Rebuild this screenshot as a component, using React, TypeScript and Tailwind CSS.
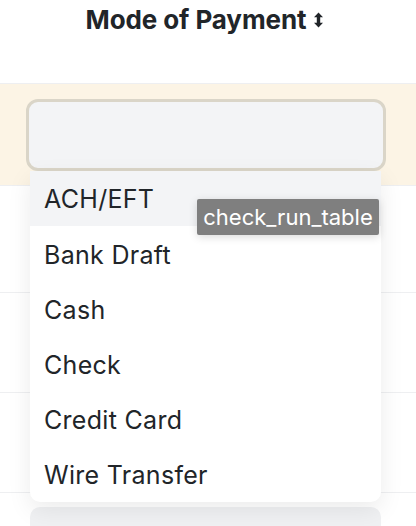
const options = ["ACH/EFT", "Bank Draft", "Cash", "Check", "Credit Card", "Wire Transfer"];

const SortIcon = () => (
  <svg width="11" height="16" viewBox="0 0 11 16" className="ml-[7px] mt-[10px]">
    <path d="M5.5 0.5 L10 5.2 L7.2 5.2 L7.2 10.8 L10 10.8 L5.5 15.5 L1 10.8 L3.8 10.8 L3.8 5.2 L1 5.2 Z" fill="#212529" />
  </svg>
);

const App = () => {
  return (
    <div
      className="relative w-[416px] h-[526px] overflow-hidden bg-white text-[#212529]"
      style={{ fontFamily: "Inter, 'Noto Sans', sans-serif" }}
    >
      <div className="h-[83px] flex justify-center pt-[2px]">
        <div className="flex items-start pr-[6px]">
          <span className="text-[26px] font-bold leading-[36px] tracking-[-0.1px]">Mode of Payment</span>
          <SortIcon />
        </div>
      </div>

      <div className="border-t border-[#eeeff1] bg-[#fcf4e5] h-[102px] pt-[15px] pl-[26px] pr-[30px]">
        <div className="h-[72px] rounded-[12px] border-[3px] border-[#dad5c8] bg-[#f3f4f6]" />
      </div>
      <div className="border-t border-[#eeeff1] h-[107px]" />
      <div className="border-t border-[#eeeff1] h-[100px]" />
      <div className="border-t border-[#eeeff1] h-[100px]" />
      <div className="border-t border-[#eeeff1] pt-[14px] px-[30px] pr-[35px]">
        <div className="h-[40px] rounded-t-[10px] bg-[#f0f1f3]" />
      </div>

      <div className="absolute left-[30px] top-[171px] w-[351px] bg-white rounded-b-[10px] shadow-[0_8px_24px_rgba(0,0,0,0.08)] overflow-hidden">
        {options.map((o, i) => (
          <div
            key={o}
            className={`h-[55.2px] flex items-center pl-[14px] pt-[3px] text-[25px] tracking-[0.3px] ${i === 0 ? "bg-[#f3f4f6]" : ""}`}
          >
            {o}
          </div>
        ))}
      </div>

      <div className="absolute left-[197px] top-[199px] h-[36px] w-[182px] flex items-center justify-center rounded-[2px] bg-[#7f7f7f] text-white text-[22px] shadow-[0_2px_8px_rgba(0,0,0,0.15)]">
        check_run_table
      </div>
    </div>
  );
};

export default App;
